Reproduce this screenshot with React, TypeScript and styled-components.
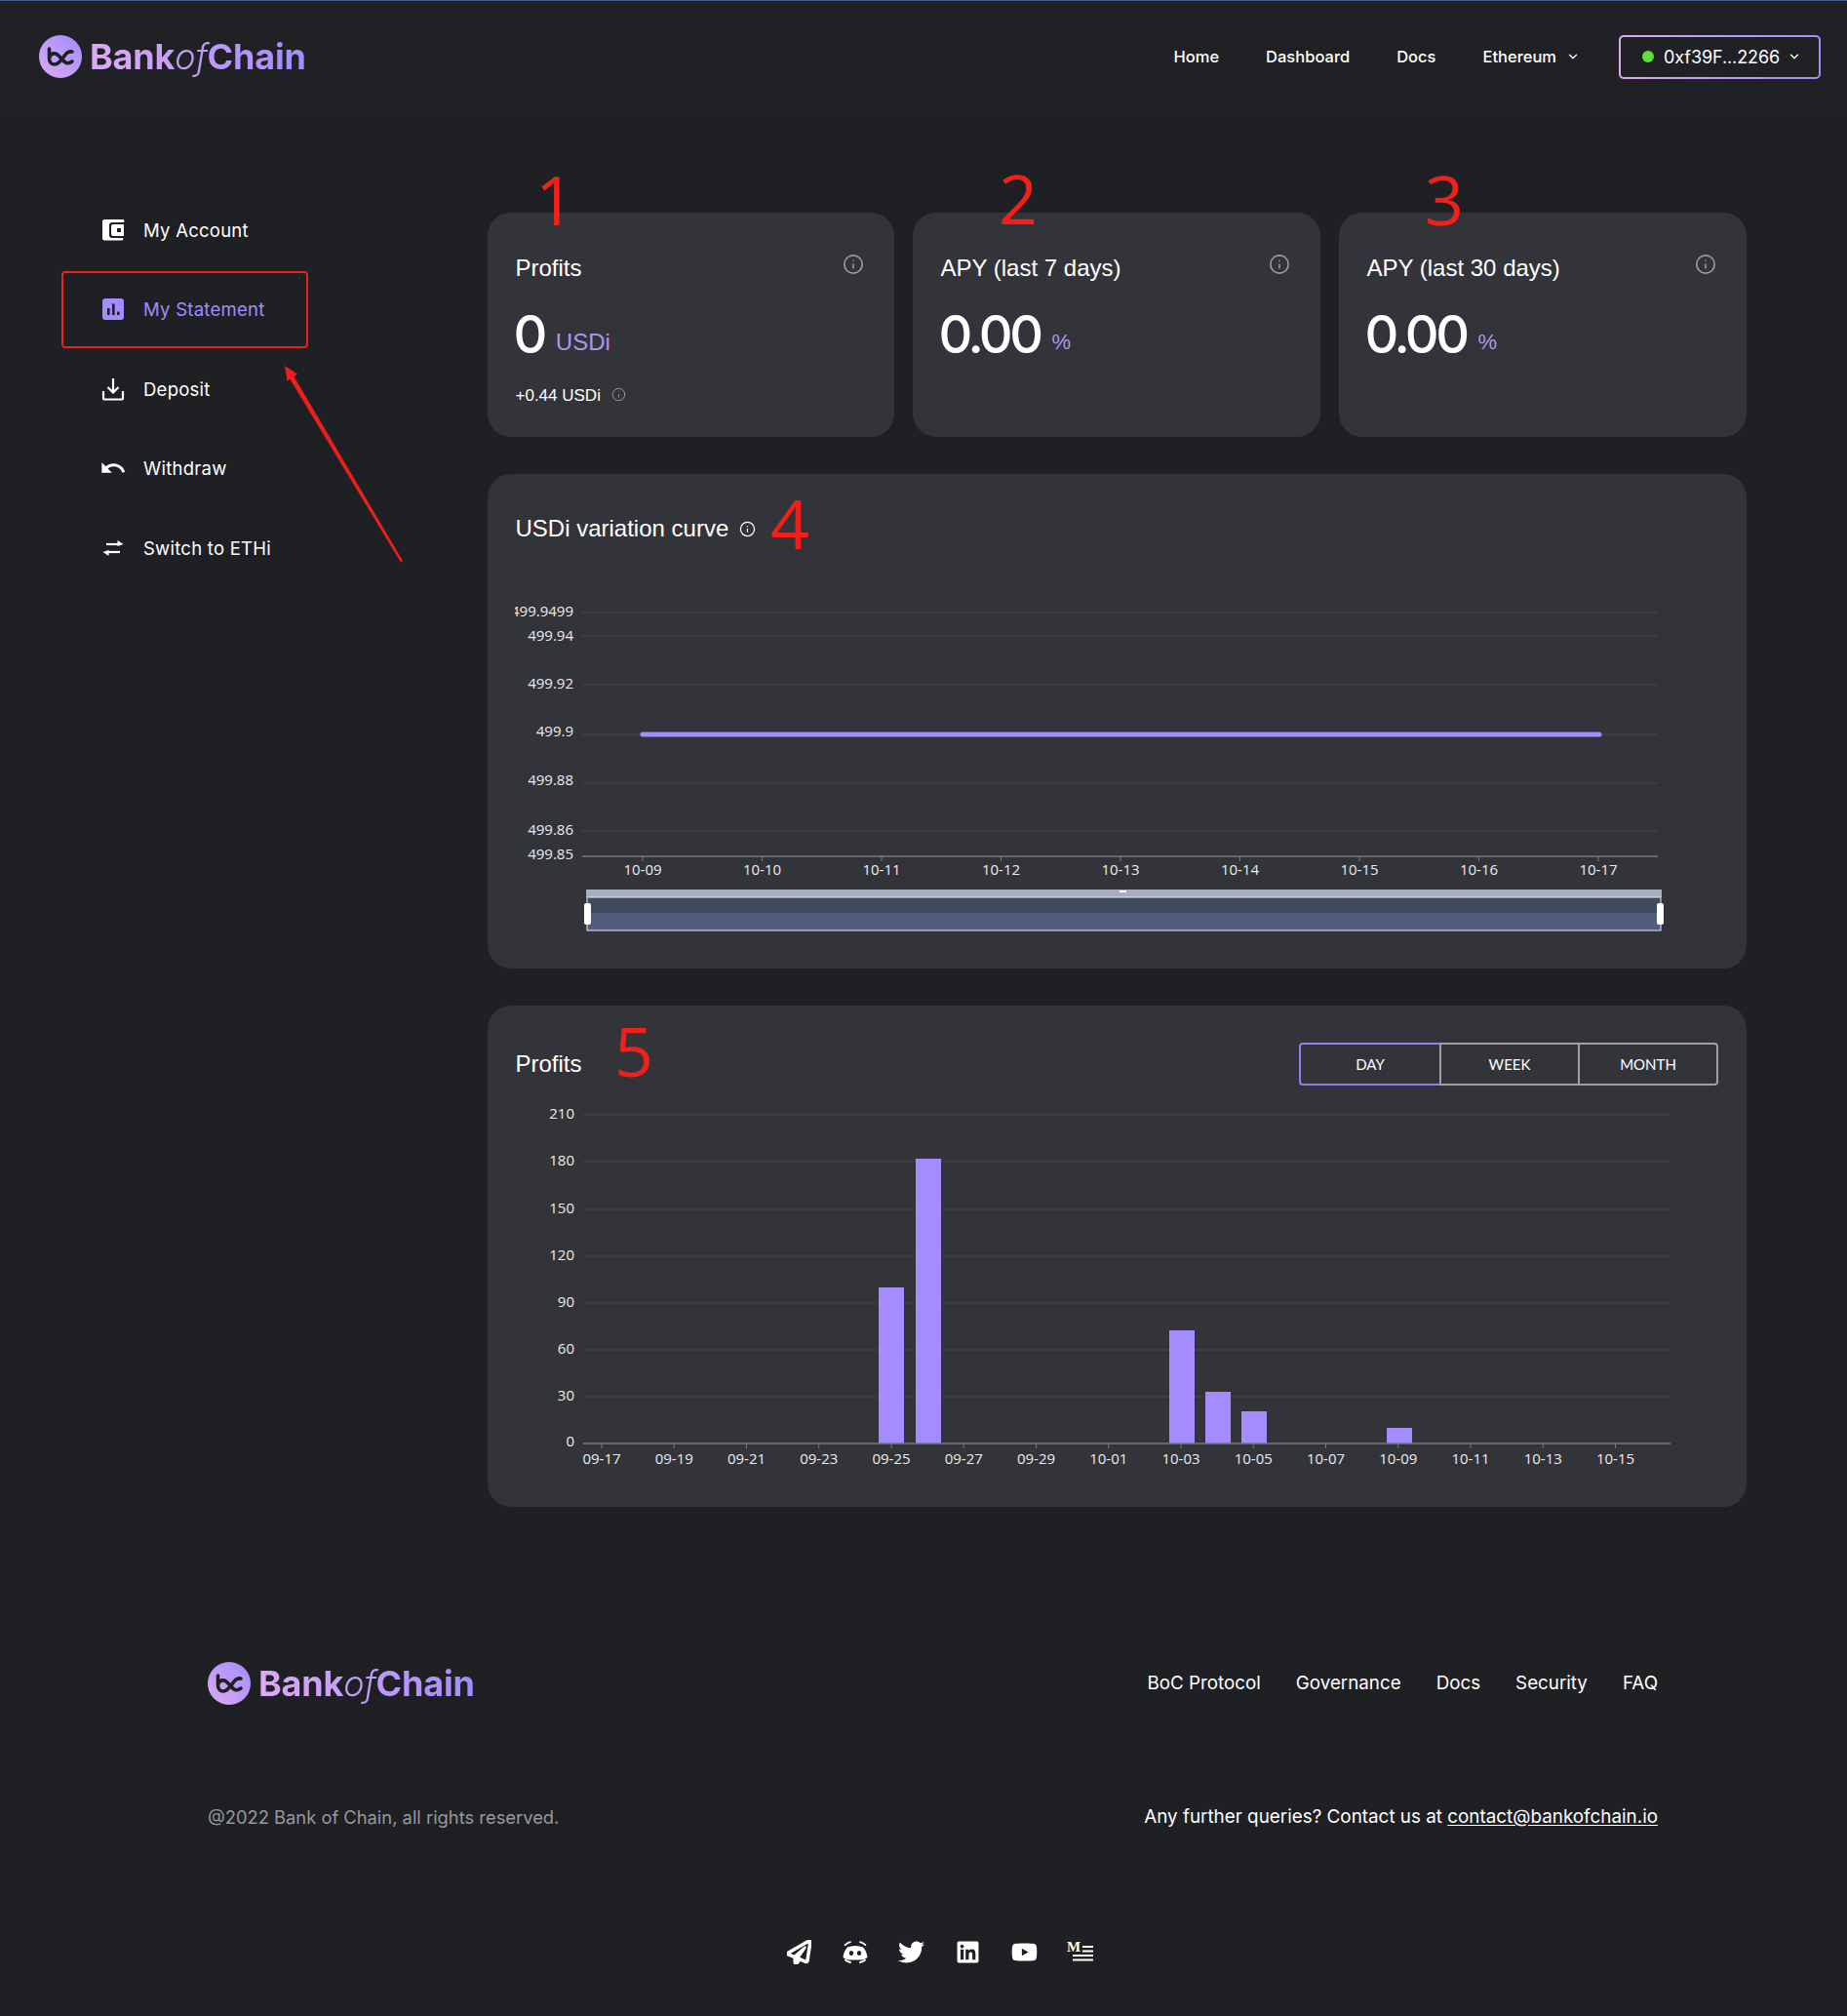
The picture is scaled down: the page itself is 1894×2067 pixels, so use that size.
import styled, { createGlobalStyle } from 'styled-components'
import { ChevronDown, Info } from 'lucide-react'
import { FaLinkedin, FaRegPaperPlane, FaTwitter, FaYoutube } from 'react-icons/fa'
import { MdUndo } from 'react-icons/md'

const UI_FONT = `Inter, "Noto Sans", sans-serif`
const ARIAL = `"Liberation Sans", Arial, sans-serif`
const CHART_FONT = `"Open Sans", "Noto Sans", sans-serif`

const GlobalStyle = createGlobalStyle`
  html, body {
    margin: 0;
    padding: 0;
    background: #1f2024;
    color: #fff;
    font-family: ${UI_FONT};
  }
  * { box-sizing: border-box; }
`

function LogoMark() {
  return (
    <svg width="44" height="44" viewBox="0 0 44 44">
      <defs>
        <linearGradient id="logoFill" x1="0" y1="1" x2="1" y2="0">
          <stop offset="0" stopColor="#dcaaf2" />
          <stop offset="1" stopColor="#a28cff" />
        </linearGradient>
      </defs>
      <circle cx="22" cy="22" r="22" fill="url(#logoFill)" />
      <g fill="none" stroke="#1f2024" strokeWidth="3.6" strokeLinecap="round">
        <path d="M10.5 14 V24 C10.5 28 13 30 16 30 C21 30 24 24 27 20 C29 17.5 31 16.5 34 17" />
        <path d="M11 22 C12 19.5 14.5 18.5 17 19 C21 20 24 27 28 28.5 C30 29 32 28.5 34 27" />
      </g>
    </svg>
  )
}

function WalletIcon() {
  return (
    <svg width="24" height="24" viewBox="0 0 24 24">
      <path
        fill="#fff"
        fillRule="evenodd"
        d="M3 1h19a1.5 1.5 0 0 1 0 3H11a3 3 0 0 0-3 3v10a3 3 0 0 0 3 3h11a1.5 1.5 0 0 1-1 2.5H3a2 2 0 0 1-2-2V3a2 2 0 0 1 2-2zM12 6h11v12H12a2 2 0 0 1-2-2V8a2 2 0 0 1 2-2zm4 4v4h4v-4z"
      />
    </svg>
  )
}

function StatementIcon() {
  return (
    <svg width="24" height="24" viewBox="0 0 24 24">
      <rect x="1" y="1" width="22" height="22" rx="3" fill="#a48cff" />
      <rect x="6" y="11" width="2.6" height="7" fill="#1f2024" />
      <rect x="11" y="6.5" width="2.6" height="11.5" fill="#1f2024" />
      <rect x="16" y="14.5" width="2.6" height="3.5" fill="#1f2024" />
    </svg>
  )
}

function DepositIcon() {
  return (
    <svg width="24" height="24" viewBox="0 0 24 24" fill="none" stroke="#fff" strokeWidth="2.2">
      <path d="M12 1v14M6.5 10l5.5 5.5 5.5-5.5" />
      <path d="M2 14v7a1.5 1.5 0 0 0 1.5 1.5h17A1.5 1.5 0 0 0 22 21v-7" />
    </svg>
  )
}

function SwitchIcon() {
  return (
    <svg width="24" height="24" viewBox="0 0 24 24" fill="none" stroke="#fff" strokeWidth="2.2">
      <path d="M5 8h13" />
      <path d="M16.5 4 L22.5 8 L16.5 10z" fill="#fff" stroke="none" />
      <path d="M19 16H6" />
      <path d="M7.5 20 L1.5 16 L7.5 14z" fill="#fff" stroke="none" />
    </svg>
  )
}

function DiscordIcon() {
  return (
    <svg width="28" height="23" viewBox="0 0 28 23">
      <path
        fill="#fff"
        d="M6 6.5 Q14 3.5 22 6.5 Q26 11 26.5 17 Q23 19.5 20 19.5 L8 19.5 Q5 19.5 1.5 17 Q2 11 6 6.5z"
      />
      <ellipse cx="10" cy="12.5" rx="2.2" ry="2.6" fill="#1f2024" />
      <ellipse cx="18" cy="12.5" rx="2.2" ry="2.6" fill="#1f2024" />
      <g fill="none" stroke="#fff" strokeWidth="1.8" strokeLinecap="round">
        <path d="M9 1.2 Q6 1.8 3.6 4.2" />
        <path d="M19 1.2 Q22 1.8 24.4 4.2" />
        <path d="M4 19.8 Q6.5 21.6 9 22" />
        <path d="M24 19.8 Q21.5 21.6 19 22" />
      </g>
    </svg>
  )
}

function MediumIcon() {
  return (
    <svg width="28" height="22" viewBox="0 0 28 22">
      <SerifGlyph x="0" y="11">M</SerifGlyph>
      <g stroke="#fff" strokeWidth="2">
        <path d="M16 6h11M16 10.5h11M6 15h21M6 19.5h21" />
      </g>
    </svg>
  )
}

const SerifGlyph = styled.text`
  font-family: "Liberation Serif", serif;
  font-size: 15px;
  font-weight: 700;
  fill: #fff;
`

const Shell = styled.div`
  position: relative;
  width: 1894px;
  min-height: 2067px;
  overflow: hidden;
`

const Header = styled.header`
  display: flex;
  align-items: center;
  justify-content: space-between;
  height: 115px;
  padding: 0 27px 0 40px;
  background: #1f2125;
  border-top: 1px solid #3f5c8f;
`

const LogoWrap = styled.div`
  display: flex;
  align-items: center;
  gap: 8px;
  font-size: 36px;
`

const LogoText = styled.span`
  font-weight: 700;
  letter-spacing: -0.2px;
  background: linear-gradient(90deg, #dcaaf2, #a48cff);
  -webkit-background-clip: text;
  background-clip: text;
  color: transparent;

  i {
    font-weight: 300;
  }
`

const TopNav = styled.nav`
  display: flex;
  align-items: center;
  gap: 48px;
`

const TopLink = styled.a`
  display: flex;
  align-items: center;
  gap: 10px;
  font-size: 16.5px;
  font-weight: 500;
  color: #fff;
`

const WalletButton = styled.button`
  display: flex;
  align-items: center;
  width: 207px;
  height: 45px;
  margin-left: -8px;
  padding: 0 18px 0 22px;
  border: 2px solid transparent;
  border-radius: 5px;
  background: linear-gradient(#1f2125, #1f2125) padding-box,
    linear-gradient(90deg, #dcaaf2, #a48cff) border-box;
  color: #fff;
  font-family: ${UI_FONT};
  font-size: 18px;
  font-weight: 400;
  letter-spacing: -0.1px;
`

const StatusDot = styled.span`
  width: 12px;
  height: 12px;
  margin-right: 10px;
  border-radius: 50%;
  background: #5fe03f;
`

const WalletLabel = styled.span`
  flex: 1;
  text-align: left;
  white-space: nowrap;
`

const Content = styled.div`
  display: flex;
  align-items: flex-start;
`

const Sidebar = styled.aside`
  width: 500px;
  padding: 81px 0 0 63px;
`

const SideItem = styled.a<{ $active?: boolean; $boxed?: boolean }>`
  display: flex;
  align-items: center;
  gap: 19px;
  width: 253px;
  height: 79px;
  margin-bottom: 2.6px;
  padding-left: 39px;
  border: 2px solid ${(p) => (p.$boxed ? '#e8231c' : 'transparent')};
  border-radius: 4px;
  color: ${(p) => (p.$active ? '#a48cff' : '#fff')};
  font-size: 18.5px;
  letter-spacing: 0.25px;
`

const Main = styled.main`
  display: flex;
  flex-direction: column;
  gap: 38px;
  width: 1291px;
  padding-top: 103px;
`

const StatRow = styled.div`
  display: grid;
  grid-template-columns: 417px 418px 418px;
  gap: 19px;
`

const Card = styled.section`
  position: relative;
  border-radius: 24px;
  background: #33343a;
`

const StatCard = styled(Card)`
  height: 230px;
  padding: 38px 29px 0 28.5px;
`

const StatHead = styled.div`
  display: flex;
  align-items: flex-start;
  justify-content: space-between;
  height: 44px;
`

const CardTitle = styled.h2`
  display: flex;
  align-items: center;
  gap: 11px;
  margin: 0;
  font-family: ${ARIAL};
  font-size: 24px;
  font-weight: 400;
  line-height: 38px;
  color: #fff;
`

const IconSlot = styled.span<{ $color: string; $raise?: number }>`
  display: inline-flex;
  color: ${(p) => p.$color};
  margin-top: ${(p) => p.$raise ?? 0}px;
  margin-right: ${(p) => (p.$raise ? 2 : 0)}px;
`

const ValueRow = styled.div`
  display: flex;
  align-items: flex-end;
  gap: 12px;
  margin-top: 13px;
  height: 60px;
`

const BigValue = styled.span`
  margin-left: -2px;
  font-family: ${UI_FONT};
  font-size: 54px;
  font-weight: 500;
  line-height: 60px;
  letter-spacing: -3.5px;
  color: #fff;
`

const Unit = styled.span<{ $small?: boolean }>`
  margin-bottom: 8px;
  font-family: ${ARIAL};
  font-size: ${(p) => (p.$small ? 22 : 24)}px;
  line-height: 28px;
  color: #b195e8;
`

const SubValue = styled.div`
  display: flex;
  align-items: center;
  gap: 11px;
  margin-top: 23px;
  font-family: ${ARIAL};
  font-size: 17px;
  color: #fff;
`

const Digit = styled.span<{ $left: number; $top: number }>`
  position: absolute;
  left: ${(p) => p.$left}px;
  top: ${(p) => p.$top}px;
  font-family: "Open Sans", sans-serif;
  font-size: 70px;
  line-height: 72px;
  font-weight: 400;
  color: #f0201a;
`

const CurveCard = styled(Card)`
  height: 507px;
  padding: 36px 0 0 28px;
`

const CurveTitle = styled(CardTitle)`
  height: 40px;
  margin: 0 0 48px 0.5px;
`

const ProfitCard = styled(Card)`
  height: 514px;
  padding: 38px 29px 0 28.5px;
`

const ProfitHead = styled.div`
  display: flex;
  align-items: center;
  justify-content: space-between;
  height: 44px;
  margin-bottom: 12px;
`

const RangeGroup = styled.div`
  display: flex;
`

const RangeButton = styled.button<{ $active?: boolean }>`
  width: 144px;
  height: 44px;
  margin-left: -2px;
  padding-bottom: 2px;
  border: 2px solid #a0a0a4;
  background: transparent;
  color: #fff;
  font-family: Lato, sans-serif;
  font-size: 15px;

  &:first-child {
    width: 146px;
    margin-left: 0;
    border-color: #8f7fe6;
    border-radius: 4px 0 0 4px;
  }

  &:last-child {
    border-radius: 0 4px 4px 0;
  }
`

const ChartSvg = styled.svg`
  display: block;
`

const AxisText = styled.text`
  font-family: ${CHART_FONT};
  font-size: 15px;
  fill: #ececec;
`

const Footer = styled.footer`
  padding: 159px 194px 43px 213px;
`

const FooterRow = styled.div<{ $gap: number }>`
  display: flex;
  align-items: center;
  justify-content: space-between;
  margin-top: ${(p) => p.$gap}px;
`

const FooterLinks = styled.div`
  display: flex;
  gap: 36px;
  padding-bottom: 2px;
  font-size: 18.8px;
  color: #fff;
`

const Copy = styled.span`
  font-size: 18.35px;
  color: #98989c;
`

const Contact = styled.span`
  font-size: 18.85px;
  color: #fff;

  u {
    text-underline-offset: 2px;
  }
`

const Socials = styled.div`
  display: flex;
  align-items: center;
  justify-content: center;
  gap: 29.7px;
  height: 30px;
  margin: 112px 0 0 14px;
  color: #fff;
`

const SocialSlot = styled.span`
  display: inline-flex;
  justify-content: center;
  width: 28px;
`

const Arrow = styled.svg`
  position: absolute;
  left: 280px;
  top: 365px;
`

const sideItems = [
  { label: 'My Account', icon: <WalletIcon /> },
  { label: 'My Statement', icon: <StatementIcon />, active: true, boxed: true },
  { label: 'Deposit', icon: <DepositIcon /> },
  { label: 'Withdraw', icon: <MdUndo size={28} style={{ margin: '0 -2px' }} /> },
  { label: 'Switch to ETHi', icon: <SwitchIcon /> },
]

const curveGrid = [18, 42, 92, 143, 193, 242]
const curveLabels = [
  { text: '499.9499', y: 22 },
  { text: '499.94', y: 47 },
  { text: '499.92', y: 96 },
  { text: '499.9', y: 145 },
  { text: '499.88', y: 195 },
  { text: '499.86', y: 246 },
  { text: '499.85', y: 271 },
]
const curveDates = ['10-09', '10-10', '10-11', '10-12', '10-13', '10-14', '10-15', '10-16', '10-17']

const profitGrid = [18, 66, 115, 163, 211, 259, 307]
const profitLabels = [
  { text: '210', y: 22 },
  { text: '180', y: 70 },
  { text: '150', y: 119 },
  { text: '120', y: 167 },
  { text: '90', y: 215 },
  { text: '60', y: 263 },
  { text: '30', y: 311 },
  { text: '0', y: 358 },
]
const profitDates = [
  '09-17', '09-19', '09-21', '09-23', '09-25', '09-27', '09-29', '10-01',
  '10-03', '10-05', '10-07', '10-09', '10-11', '10-13', '10-15',
]
const profitBars = [
  { x: 372, top: 195 },
  { x: 410, top: 63 },
  { x: 670, top: 239 },
  { x: 707, top: 302 },
  { x: 744, top: 322 },
  { x: 893, top: 339 },
]

function CurveChart() {
  return (
    <ChartSvg width="1230" height="360" viewBox="0 0 1230 360">
      {curveGrid.map((y) => (
        <line key={y} x1="69" x2="1172" y1={y} y2={y} stroke="#46474d" />
      ))}
      <line x1="69" x2="1172" y1="268" y2="268" stroke="#77787e" strokeWidth="1.5" />
      {curveLabels.map((l) => (
        <AxisText key={l.text} x="60" y={l.y} textAnchor="end">{l.text}</AxisText>
      ))}
      {curveDates.map((d, i) => (
        <g key={d}>
          <line x1={131 + i * 122.5} x2={131 + i * 122.5} y1="268" y2="273" stroke="#77787e" />
          <AxisText x={131 + i * 122.5} y="287" textAnchor="middle">{d}</AxisText>
        </g>
      ))}
      <line x1="131" x2="1112" y1="143" y2="143" stroke="#a48cff" strokeWidth="5" strokeLinecap="round" />
      <rect x="73" y="302" width="1103" height="8" fill="#a8aebf" />
      <rect x="74" y="310" width="1101" height="16" fill="#414b5e" />
      <rect x="74" y="326" width="1101" height="18" fill="#525c7c" />
      <rect x="74" y="310" width="1101" height="34" fill="none" stroke="#e6e9f2" />
      <rect x="620" y="303" width="7" height="2" fill="#fff" />
      <rect x="71" y="316" width="7" height="22" rx="2" fill="#fff" />
      <rect x="1171" y="316" width="7" height="22" rx="2" fill="#fff" />
    </ChartSvg>
  )
}

function ProfitChart() {
  return (
    <ChartSvg width="1232" height="395" viewBox="0 0 1232 395">
      {profitGrid.map((y) => (
        <line key={y} x1="69" x2="1184" y1={y} y2={y} stroke="#46474d" />
      ))}
      {profitBars.map((b) => (
        <rect key={b.x} x={b.x} y={b.top} width="26" height={355 - b.top} fill="#a48cff" />
      ))}
      <line x1="69" x2="1184" y1="355" y2="355" stroke="#77787e" strokeWidth="1.5" />
      {profitLabels.map((l) => (
        <AxisText key={l.text} x="60" y={l.y} textAnchor="end">{l.text}</AxisText>
      ))}
      {profitDates.map((d, i) => (
        <g key={d}>
          <line x1={88 + i * 74.25} x2={88 + i * 74.25} y1="355" y2="360" stroke="#77787e" />
          <AxisText x={88 + i * 74.25} y="376" textAnchor="middle">{d}</AxisText>
        </g>
      ))}
    </ChartSvg>
  )
}

function Logo() {
  return (
    <LogoWrap>
      <LogoMark />
      <LogoText>
        Bank<i>of</i>Chain
      </LogoText>
    </LogoWrap>
  )
}

export default function App() {
  return (
    <Shell>
      <GlobalStyle />
      <Header>
        <Logo />
        <TopNav>
          <TopLink>Home</TopLink>
          <TopLink>Dashboard</TopLink>
          <TopLink>Docs</TopLink>
          <TopLink>
            Ethereum <ChevronDown size={14} strokeWidth={2.2} />
          </TopLink>
          <WalletButton>
            <StatusDot />
            <WalletLabel>0xf39F...2266</WalletLabel>
            <ChevronDown size={14} strokeWidth={2.2} />
          </WalletButton>
        </TopNav>
      </Header>

      <Content>
        <Sidebar>
          {sideItems.map((item) => (
            <SideItem key={item.label} $active={item.active} $boxed={item.boxed}>
              {item.icon}
              {item.label}
            </SideItem>
          ))}
        </Sidebar>

        <Main>
          <StatRow>
            <StatCard>
              <Digit $left={49} $top={-50}>1</Digit>
              <StatHead>
                <CardTitle>Profits</CardTitle>
                <IconSlot $color="#9b9ba0" $raise={4}><Info size={22} strokeWidth={1.8} /></IconSlot>
              </StatHead>
              <ValueRow>
                <BigValue>0</BigValue>
                <Unit>USDi</Unit>
              </ValueRow>
              <SubValue>
                +0.44 USDi
                <IconSlot $color="#9b9ba0" $raise={-3}><Info size={15} strokeWidth={1.5} /></IconSlot>
              </SubValue>
            </StatCard>
            <StatCard>
              <Digit $left={88} $top={-51}>2</Digit>
              <StatHead>
                <CardTitle>APY (last 7 days)</CardTitle>
                <IconSlot $color="#9b9ba0" $raise={4}><Info size={22} strokeWidth={1.8} /></IconSlot>
              </StatHead>
              <ValueRow>
                <BigValue>0.00</BigValue>
                <Unit $small>%</Unit>
              </ValueRow>
            </StatCard>
            <StatCard>
              <Digit $left={88} $top={-50}>3</Digit>
              <StatHead>
                <CardTitle>APY (last 30 days)</CardTitle>
                <IconSlot $color="#9b9ba0" $raise={4}><Info size={22} strokeWidth={1.8} /></IconSlot>
              </StatHead>
              <ValueRow>
                <BigValue>0.00</BigValue>
                <Unit $small>%</Unit>
              </ValueRow>
            </StatCard>
          </StatRow>

          <CurveCard>
            <Digit $left={290} $top={14}>4</Digit>
            <CurveTitle>
              USDi variation curve
              <IconSlot $color="#fff"><Info size={17} strokeWidth={1.8} /></IconSlot>
            </CurveTitle>
            <CurveChart />
          </CurveCard>

          <ProfitCard>
            <Digit $left={130} $top={10}>5</Digit>
            <ProfitHead>
              <CardTitle>Profits</CardTitle>
              <RangeGroup>
                <RangeButton $active>DAY</RangeButton>
                <RangeButton>WEEK</RangeButton>
                <RangeButton>MONTH</RangeButton>
              </RangeGroup>
            </ProfitHead>
            <ProfitChart />
          </ProfitCard>
        </Main>
      </Content>

      <Footer>
        <FooterRow $gap={0}>
          <Logo />
          <FooterLinks>
            <span>BoC Protocol</span>
            <span>Governance</span>
            <span>Docs</span>
            <span>Security</span>
            <span>FAQ</span>
          </FooterLinks>
        </FooterRow>
        <FooterRow $gap={103}>
          <Copy>@2022 Bank of Chain, all rights reserved.</Copy>
          <Contact>
            Any further queries? Contact us at <u>contact@bankofchain.io</u>
          </Contact>
        </FooterRow>
        <Socials>
          <SocialSlot><FaRegPaperPlane size={25} stroke="currentColor" strokeWidth={24} /></SocialSlot>
          <SocialSlot><DiscordIcon /></SocialSlot>
          <SocialSlot><FaTwitter size={27} /></SocialSlot>
          <SocialSlot><FaLinkedin size={25} /></SocialSlot>
          <SocialSlot><FaYoutube size={27} /></SocialSlot>
          <SocialSlot><MediumIcon /></SocialSlot>
        </Socials>
      </Footer>

      <Arrow width="140" height="220" viewBox="0 0 140 220">
        <polygon points="12,10 25,18.5 21.4,21 133,210 131,211.5 17.2,23.5 14.5,26" fill="#ee1f1a" />
      </Arrow>
    </Shell>
  )
}
